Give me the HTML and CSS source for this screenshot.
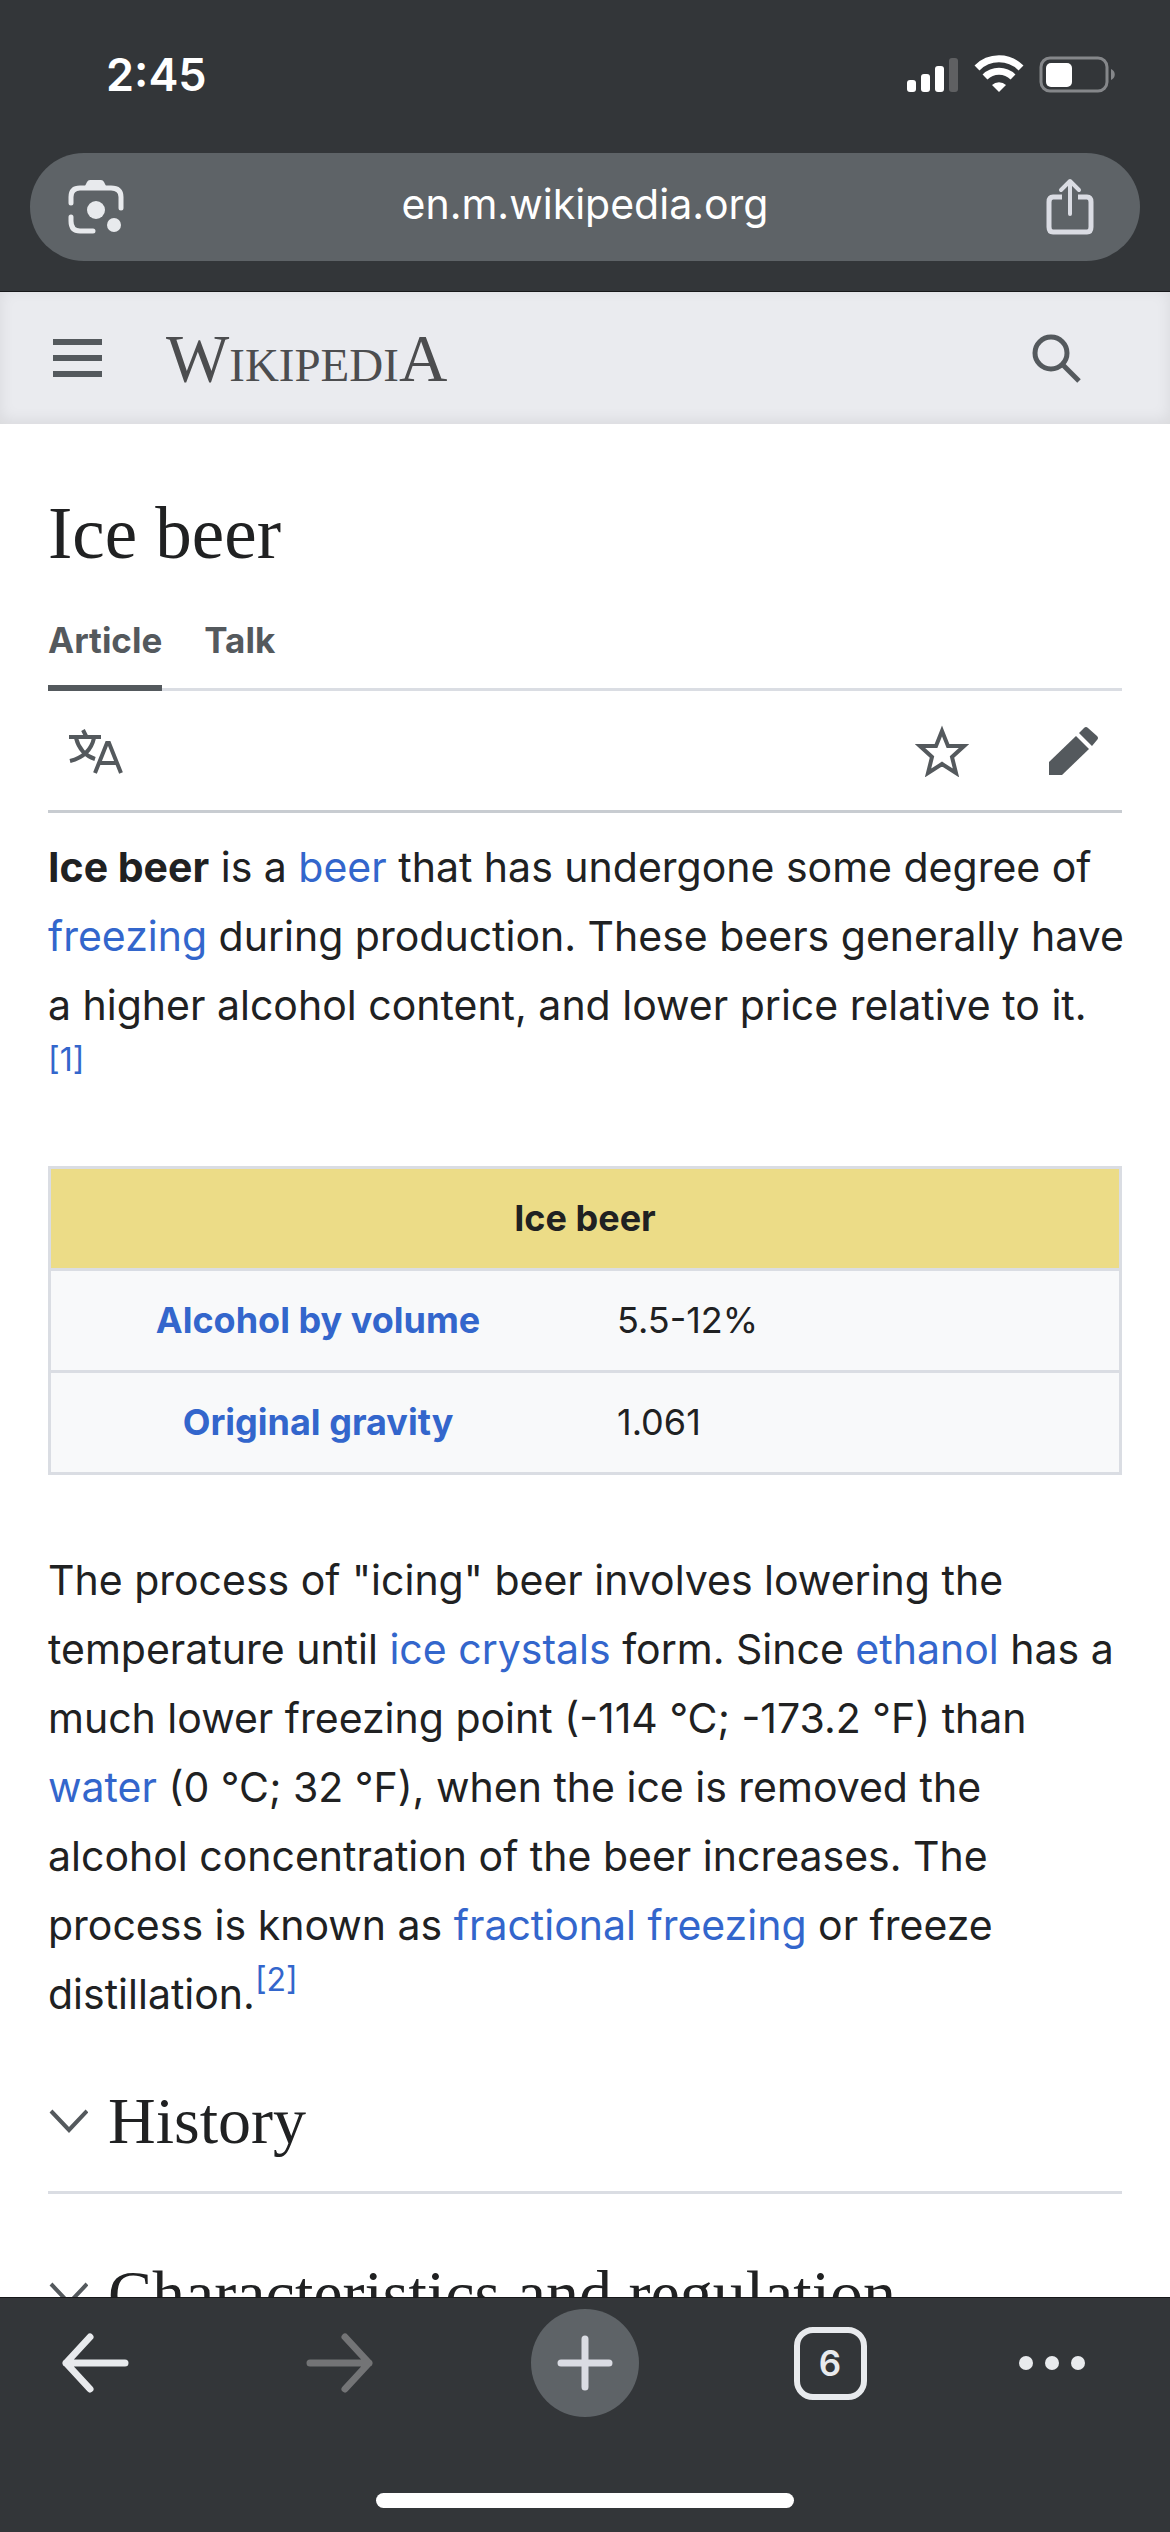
FILE: index.html
```html
<!DOCTYPE html>
<html lang="en">
<head>
    <meta charset="UTF-8">
    <meta name="viewport" content="width=device-width, initial-scale=1.0">
    <title>Ice beer - Wikipedia</title>
    <link rel="stylesheet" href="styles.css">
</head>
<body>
    <div class="browser-top">
        <div class="status-bar">
            <span class="time">2:45</span>
            <svg class="status-icons" width="210" height="40" viewBox="0 0 210 40" aria-hidden="true">
                <g fill="#fff">
                    <rect x="1" y="25" width="9" height="12" rx="3"/>
                    <rect x="15" y="19" width="9" height="18" rx="3"/>
                    <rect x="29" y="11" width="9" height="26" rx="3"/>
                    <rect x="43" y="3" width="9" height="34" rx="3" fill="#5f6062"/>
                    <path d="M93 37 L86 30 A10 10 0 0 1 100 30 Z"/>
                </g>
                <path d="M71 13 A31 31 0 0 1 115 13" fill="none" stroke="#fff" stroke-width="7"/>
                <path d="M79 22 A20 20 0 0 1 107 22" fill="none" stroke="#fff" stroke-width="7"/>
                <rect x="135" y="3" width="66" height="33" rx="9" fill="none" stroke="#85878a" stroke-width="3"/>
                <rect x="140" y="8" width="26" height="24" rx="5" fill="#fff"/>
                <path d="M205 14 C210 16 210 23 205 25 Z" fill="#85878a"/>
            </svg>
        </div>
        <div class="address-bar">
            <button class="icon-btn" aria-label="Search with camera">
                <svg width="56" height="56" viewBox="0 0 56 56" fill="none" stroke="#e8eaed" stroke-width="5" stroke-linecap="round">
                    <path d="M3 24 V18 Q3 9 12 9 H43 Q53 9 53 18 V29"/>
                    <path d="M3 38 V42 Q3 52 12 52 H25"/>
                    <path d="M16 9 L19 3 Q20 1 22 1 H33 Q35 1 36 3 L39 9 Z" fill="#e8eaed" stroke="none"/>
                    <circle cx="28" cy="31" r="9" fill="#e8eaed" stroke="none"/>
                    <circle cx="46" cy="46" r="7" fill="#e8eaed" stroke="none"/>
                </svg>
            </button>
            <a class="url" href="#">en.m.wikipedia.org</a>
            <button class="icon-btn" aria-label="Share">
                <svg width="48" height="58" viewBox="0 0 48 58" fill="none" stroke="#dadce3" stroke-width="5" stroke-linecap="round" stroke-linejoin="round">
                    <path d="M16 19 H7 Q3 19 3 24 V49 Q3 54 7 54 H41 Q45 54 45 49 V24 Q45 19 41 19 H32" stroke-linecap="butt"/>
                    <path d="M24 36 V4 M15 12 L24 3 L33 12" stroke-width="4"/>
                </svg>
            </button>
        </div>
    </div>

    <header class="site-header">
        <button class="icon-btn" aria-label="Menu">
            <svg width="50" height="40" viewBox="0 0 50 40" fill="#54595d">
                <rect x="1" y="1" width="49" height="6"/>
                <rect x="1" y="17" width="49" height="6"/>
                <rect x="1" y="33" width="49" height="6"/>
            </svg>
        </button>
        <a class="wordmark" href="#">WikipediA</a>
        <button class="icon-btn" aria-label="Search">
            <svg width="50" height="50" viewBox="0 0 50 50" fill="none" stroke="#54595d">
                <circle cx="20" cy="20" r="16" stroke-width="5"/>
                <path d="M31 31 L48 48" stroke-width="5"/>
            </svg>
        </button>
    </header>

    <main class="content">
        <h1>Ice beer</h1>
        <nav class="tabs">
            <a class="tab active" href="#">Article</a>
            <a class="tab" href="#">Talk</a>
        </nav>
        <div class="page-actions">
            <button class="icon-btn" aria-label="Language">
                <svg width="56" height="46" viewBox="0 0 56 46" fill="none" stroke="#54595d" stroke-width="4">
                    <path d="M1 9 H33 M15 2 L18 8 M8 10 Q12 26 27 31 M26 10 Q22 28 2 33"/>
                    <path d="M27 45 L39 15 H41 L53 45 M31 35 H49"/>
                </svg>
            </button>
            <button class="icon-btn push" aria-label="Watch">
                <svg width="54" height="52" viewBox="0 0 54 52" fill="none" stroke="#54595d" stroke-width="4">
                    <path d="M27 6 L33 21 H49 L37 32 L41 48 L27 39 L13 48 L17 32 L5 21 H21 Z"/>
                </svg>
            </button>
            <button class="icon-btn" aria-label="Edit">
                <svg width="50" height="50" viewBox="0 0 50 50" fill="#54595d">
                    <path d="M0 36 L27 10 L40 23 L13 49 H0 Z"/>
                    <path d="M30 7 L35 2 Q37 0 39 2 L48 10 Q50 12 48 14 L43 20 Z"/>
                </svg>
            </button>
        </div>

        <p><b>Ice beer</b> is a <a href="#">beer</a> that has undergone some degree of <a href="#">freezing</a> during production. These beers generally have a higher alcohol content, and lower price relative to it.<br><sup><a href="#">[1]</a></sup></p>

        <table class="infobox">
            <tr>
                <th class="infobox-title" colspan="2">Ice beer</th>
            </tr>
            <tr>
                <th scope="row"><a href="#">Alcohol by volume</a></th>
                <td>5.5-12%</td>
            </tr>
            <tr>
                <th scope="row"><a href="#">Original gravity</a></th>
                <td>1.061</td>
            </tr>
        </table>

        <p>The process of "icing" beer involves lowering the temperature until <a href="#">ice crystals</a> form. Since <a href="#">ethanol</a> has a much lower freezing point (-114 °C; -173.2 °F) than <a href="#">water</a> (0 °C; 32 °F), when the ice is removed the alcohol concentration of the beer increases. The process is known as <a href="#">fractional freezing</a> or freeze distillation.<sup><a href="#">[2]</a></sup></p>

        <section class="section">
            <svg width="40" height="26" viewBox="0 0 40 26" fill="none" stroke="#54595d" stroke-width="4"><path d="M3 3 L21 22 L39 3"/></svg>
            <h2>History</h2>
        </section>
        <section class="section">
            <svg width="40" height="26" viewBox="0 0 40 26" fill="none" stroke="#54595d" stroke-width="4"><path d="M3 3 L21 22 L39 3"/></svg>
            <h2>Characteristics and regulation</h2>
        </section>
    </main>

    <footer class="browser-bottom">
        <div class="toolbar">
            <button class="tool-btn" aria-label="Back">
                <svg width="68" height="64" viewBox="0 0 68 64" fill="none" stroke="#e8eaed" stroke-width="7" stroke-linecap="round" stroke-linejoin="round">
                    <path d="M64 32 H5 M29 6 L5 32 L29 58"/>
                </svg>
            </button>
            <button class="tool-btn" aria-label="Forward" disabled>
                <svg width="68" height="64" viewBox="0 0 68 64" fill="none" stroke="#737476" stroke-width="7" stroke-linecap="round" stroke-linejoin="round">
                    <path d="M4 32 H63 M39 6 L63 32 L39 58"/>
                </svg>
            </button>
            <button class="tool-btn new-tab" aria-label="New tab">
                <svg width="56" height="56" viewBox="0 0 56 56" fill="none" stroke="#dadce3" stroke-width="7" stroke-linecap="round">
                    <path d="M4 28 H52 M28 4 V52"/>
                </svg>
            </button>
            <button class="tool-btn" aria-label="Open tabs"><span class="tab-count">6</span></button>
            <button class="tool-btn more" aria-label="More">
                <svg width="68" height="16" viewBox="0 0 68 16" fill="#e8eaed">
                    <circle cx="8" cy="8" r="7"/>
                    <circle cx="34" cy="8" r="7"/>
                    <circle cx="60" cy="8" r="7"/>
                </svg>
            </button>
        </div>
        <div class="home-indicator"></div>
    </footer>
</body>
</html>
```
FILE: styles.css
```css
* {
    margin: 0;
    padding: 0;
    box-sizing: border-box;
}

body {
    display: flex;
    flex-direction: column;
    height: 100vh;
    font-family: Inter, "Liberation Sans", sans-serif;
    background-color: #fff;
    color: #202122;
}

a {
    color: #3366cc;
    text-decoration: none;
}

button {
    background: none;
    border: none;
    font-family: inherit;
    cursor: pointer;
}

svg {
    display: block;
    flex-shrink: 0;
}

/* browser top */
.browser-top {
    background: #333639;
    padding: 0 30px 30px;
    border-bottom: 1px solid #17181a;
}

.status-bar {
    display: flex;
    justify-content: space-between;
    align-items: center;
    height: 153px;
    padding: 0 24px 4px 76px;
}

.time {
    font-size: 45px;
    font-weight: 600;
    color: #fff;
}

.address-bar {
    display: flex;
    justify-content: space-between;
    align-items: center;
    height: 108px;
    padding: 0 46px 0 38px;
    border-radius: 54px;
    background: #5e6367;
}

.url {
    color: #fff;
    font-size: 41px;
    line-height: 48px;
    padding-bottom: 6px;
}

/* wikipedia header */
.site-header {
    display: flex;
    align-items: center;
    height: 132px;
    padding: 0 89px 0 52px;
    background: #eaebef;
    box-shadow: inset 0 -3px 15px rgba(0, 0, 0, 0.08);
}

.wordmark {
    flex: 1;
    margin-left: 64px;
    font-family: "Liberation Serif", serif;
    font-size: 67px;
    line-height: 72px;
    font-variant: small-caps;
    color: #4c4d4f;
}

/* article */
.content {
    flex: 1;
    min-height: 0;
    overflow: hidden;
    padding: 65px 48px 0;
}

h1 {
    font-family: "Liberation Serif", serif;
    font-size: 73px;
    line-height: 90px;
    font-weight: normal;
}

.tabs {
    display: flex;
    gap: 42px;
    margin-top: 37px;
    border-bottom: 3px solid #dadde3;
}

.tab {
    font-size: 35px;
    line-height: 48px;
    font-weight: 700;
    color: #54595d;
    padding-bottom: 21px;
    border-bottom: 6px solid transparent;
    margin-bottom: -3px;
}

.tab.active {
    border-bottom-color: #54595d;
}

.page-actions {
    display: flex;
    align-items: center;
    height: 122px;
    padding: 0 23px 0 20px;
    border-bottom: 3px solid #c8ccd1;
    margin-bottom: 20px;
}

.page-actions .push {
    margin-left: auto;
    margin-right: 80px;
}

p {
    margin-right: -4px;
    font-size: 41px;
    line-height: 69px;
}

sup {
    font-size: 32px;
    line-height: 1;
    vertical-align: 18px;
}

.infobox {
    width: 100%;
    margin: 57px 0 71px;
    border-collapse: collapse;
    border: 3px solid #dadde3;
    background: #f8f9fa;
    font-size: 36px;
    line-height: 51px;
}

.infobox th,
.infobox td {
    padding: 24px 32px;
    border-top: 3px solid #dadde3;
}

.infobox th {
    width: 50%;
    font-weight: 700;
}

.infobox td {
    text-align: left;
}

.infobox .infobox-title {
    background: #ecdc87;
}

.section {
    display: flex;
    align-items: center;
    gap: 20px;
    padding: 57px 0 36px;
    border-bottom: 3px solid #dadde3;
}

.section + .section {
    padding-top: 65px;
}

h2 {
    font-family: "Liberation Serif", serif;
    font-size: 66px;
    line-height: 69px;
    font-weight: normal;
    white-space: nowrap;
}

/* browser bottom */
.browser-bottom {
    background: #333639;
    border-top: 1px solid #17181a;
    padding: 11px 0 24px;
}

.toolbar {
    display: flex;
    justify-content: space-between;
    align-items: center;
    padding: 0 87px 0 41px;
}

.tool-btn {
    display: flex;
    justify-content: center;
    align-items: center;
    width: 108px;
    height: 108px;
}

.tool-btn.more {
    width: 62px;
}

.new-tab {
    border-radius: 50%;
    background: #5e6367;
}

.tab-count {
    width: 73px;
    height: 73px;
    border: 6px solid #e8eaed;
    border-radius: 19px;
    color: #e8eaed;
    font-size: 35px;
    line-height: 61px;
    font-weight: 600;
}

.home-indicator {
    width: 418px;
    height: 15px;
    margin: 76px auto 0;
    border-radius: 8px;
    background: #fff;
}
```
